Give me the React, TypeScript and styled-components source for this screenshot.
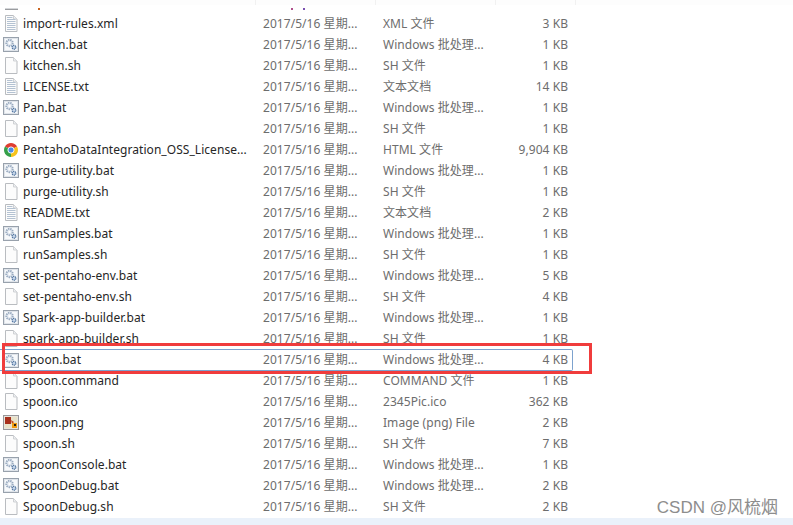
import styled, { createGlobalStyle } from 'styled-components'

type Kind = 'bat' | 'blank' | 'text' | 'chrome' | 'png'

type FileRow = {
  name: string
  type: string
  size: string
  kind: Kind
  selected?: boolean
}

const BAT = 'Windows 批处理...'

const files: FileRow[] = [
  { name: 'import-rules.xml', type: 'XML 文件', size: '3 KB', kind: 'text' },
  { name: 'Kitchen.bat', type: BAT, size: '1 KB', kind: 'bat' },
  { name: 'kitchen.sh', type: 'SH 文件', size: '1 KB', kind: 'blank' },
  { name: 'LICENSE.txt', type: '文本文档', size: '14 KB', kind: 'text' },
  { name: 'Pan.bat', type: BAT, size: '1 KB', kind: 'bat' },
  { name: 'pan.sh', type: 'SH 文件', size: '1 KB', kind: 'blank' },
  { name: 'PentahoDataIntegration_OSS_License...', type: 'HTML 文件', size: '9,904 KB', kind: 'chrome' },
  { name: 'purge-utility.bat', type: BAT, size: '1 KB', kind: 'bat' },
  { name: 'purge-utility.sh', type: 'SH 文件', size: '1 KB', kind: 'blank' },
  { name: 'README.txt', type: '文本文档', size: '2 KB', kind: 'text' },
  { name: 'runSamples.bat', type: BAT, size: '1 KB', kind: 'bat' },
  { name: 'runSamples.sh', type: 'SH 文件', size: '1 KB', kind: 'blank' },
  { name: 'set-pentaho-env.bat', type: BAT, size: '5 KB', kind: 'bat' },
  { name: 'set-pentaho-env.sh', type: 'SH 文件', size: '4 KB', kind: 'blank' },
  { name: 'Spark-app-builder.bat', type: BAT, size: '1 KB', kind: 'bat' },
  { name: 'spark-app-builder.sh', type: 'SH 文件', size: '1 KB', kind: 'blank' },
  { name: 'Spoon.bat', type: BAT, size: '4 KB', kind: 'bat', selected: true },
  { name: 'spoon.command', type: 'COMMAND 文件', size: '1 KB', kind: 'blank' },
  { name: 'spoon.ico', type: '2345Pic.ico', size: '362 KB', kind: 'blank' },
  { name: 'spoon.png', type: 'Image (png) File', size: '2 KB', kind: 'png' },
  { name: 'spoon.sh', type: 'SH 文件', size: '7 KB', kind: 'blank' },
  { name: 'SpoonConsole.bat', type: BAT, size: '1 KB', kind: 'bat' },
  { name: 'SpoonDebug.bat', type: BAT, size: '2 KB', kind: 'bat' },
  { name: 'SpoonDebug.sh', type: 'SH 文件', size: '2 KB', kind: 'blank' }
]

const GlobalStyle = createGlobalStyle`
  html, body {
    margin: 0;
    padding: 0;
    background: #fff;
  }
`

function Sheet({ lines }: { lines?: boolean }) {
  return (
    <svg width='16' height='17' viewBox='0 0 16 17'>
      <path d='M2.5 .5h8l3.500 3.500v12.500h-11.500z' fill='#fcfcfc' stroke='#b9bcc0' />
      <path d='M10.500 .5v3.500h3.500' fill='#eef0f2' stroke='#cfd1d4' />
      {lines && (
        <path
          d='M4 2.500h5.500M4 4.500h8.500M4 6.500h8.500M4 8.500h8.500M4 10.500h8.500M4 12.500h8.500M4 14.500h8.500'
          stroke='#b4c2d2'
        />
      )}
    </svg>
  )
}

function FileIcon({ kind }: { kind: Kind }) {
  if (kind === 'blank') return <Sheet />
  if (kind === 'text') return <Sheet lines />
  if (kind === 'bat') {
    return (
      <svg width='16' height='15' viewBox='0 0 16 15'>
        <rect x='.5' y='.5' width='15' height='14' fill='#dfe4ea' stroke='#98a1ac' />
        <rect x='2' y='2' width='12' height='11' fill='#f7f9fb' />
        <circle cx='6.500' cy='6' r='3.200' fill='#e6ecf3' stroke='#9aabc0' strokeWidth='2' strokeDasharray='1.400 .8' />
        <circle cx='6.500' cy='6' r='1.100' fill='#fff' />
        <circle cx='11' cy='10.300' r='1.900' fill='#c7d6e8' stroke='#4a6f9c' strokeWidth='1.200' strokeDasharray='1.200 .6' />
      </svg>
    )
  }
  if (kind === 'chrome') {
    return (
      <svg width='16' height='16' viewBox='0 0 16 16'>
        <path d='M8 8L1.940 4.500A7 7 0 0 1 14.060 4.500z' fill='#df3d31' />
        <path d='M8 8L14.060 4.500A7 7 0 0 1 8 15z' fill='#f6c31d' />
        <path d='M8 8L8 15A7 7 0 0 1 1.940 4.500z' fill='#36a04a' />
        <circle cx='8' cy='8' r='3.100' fill='#4a8be8' stroke='#fff' strokeWidth='.9' />
      </svg>
    )
  }
  return (
    <svg width='16' height='15' viewBox='0 0 16 15'>
      <rect x='.5' y='.5' width='15' height='14' fill='#e8e4dc' stroke='#98989a' />
      <rect x='2' y='2' width='12' height='11' fill='#e9e2c8' />
      <rect x='2' y='2' width='6' height='7' fill='#a8301c' />
      <path d='M8 5l3 2-2 2z' fill='#c2481e' />
      <rect x='9' y='8' width='5' height='5' fill='#f09a10' />
      <rect x='11' y='9' width='2' height='2' fill='#262012' />
    </svg>
  )
}

export default function App() {
  return (
    <>
      <GlobalStyle />
      <Page>
        <ColumnHeads>
          <ColumnHead $width={256} />
          <ColumnHead $width={120} />
          <ColumnHead $width={120} />
          <ColumnHead $width={80} />
        </ColumnHeads>
        <Sliver>
          <IconBase />
          <Speck $left={20} $color='#c8641e' />
          <Speck $left={251} $color='#b0508c' />
          <Speck $left={10} $color='#7a50b0' />
        </Sliver>
        {files.map((file) => (
          <Row key={file.name} $selected={file.selected}>
            <IconCell>
              <FileIcon kind={file.kind} />
            </IconCell>
            <Name>{file.name}</Name>
            <Detail>2017/5/16 星期...</Detail>
            <Detail>{file.type}</Detail>
            <Size>{file.size}</Size>
          </Row>
        ))}
        <RedBox />
        <Watermark>CSDN @风梳烟</Watermark>
      </Page>
    </>
  )
}

const Page = styled.div`
  position: relative;
  width: 793px;
  height: 525px;
  overflow: hidden;
  background: #fff;
  border-bottom: 7px solid #eaf1fa;
  box-sizing: border-box;
  font-family: 'Noto Sans', 'Noto Sans CJK SC', sans-serif;
  font-size: 12px;
  letter-spacing: 0.05px;
`

const ColumnHeads = styled.div`
  display: flex;
  height: 5px;
  background: #fdfdfd;
`

const ColumnHead = styled.div<{ $width: number }>`
  width: ${(p) => p.$width}px;
  box-sizing: border-box;
  border-right: 1px solid #f1f1f1;
`

const Sliver = styled.div`
  display: flex;
  height: 8px;
  padding: 3px 0 0 5px;
  box-sizing: border-box;
`

const IconBase = styled.div`
  width: 13px;
  height: 2px;
  background: #d4d6d9;
  border-bottom: 1px solid #9a9c9f;
  box-sizing: border-box;
`

const Speck = styled.div<{ $left: number; $color: string }>`
  width: 2px;
  height: 2px;
  margin-left: ${(p) => p.$left}px;
  background: ${(p) => p.$color};
`

const Row = styled.div<{ $selected?: boolean }>`
  display: grid;
  grid-template-columns: 23px 240px 120px 129px 60px;
  align-items: center;
  box-sizing: border-box;
  width: 572px;
  height: 21px;
  line-height: 20px;
  ${(p) =>
    p.$selected &&
    `
    border: 1px solid #7da2ce;
    border-left: none;
    border-radius: 0 2px 2px 0;
    height: 22px;
    margin-bottom: -1px;
    width: 573px;
  `}
`

const IconCell = styled.div`
  display: flex;
  padding-left: 3px;
`

const Name = styled.div`
  color: #262626;
  white-space: nowrap;
`

const Detail = styled.div`
  color: #6d6d6d;
  white-space: nowrap;
`

const Size = styled(Detail)`
  text-align: right;
  padding-right: 4px;
`

const RedBox = styled.div`
  position: absolute;
  left: 2px;
  top: 343px;
  width: 584px;
  height: 25px;
  border: 3px solid #f03c3c;
`

const Watermark = styled.div`
  position: absolute;
  right: 15px;
  bottom: 0;
  font-family: 'Liberation Sans', 'Noto Sans CJK SC', sans-serif;
  font-size: 17px;
  letter-spacing: 0;
  line-height: 20px;
  color: #8d8d8d;
`
